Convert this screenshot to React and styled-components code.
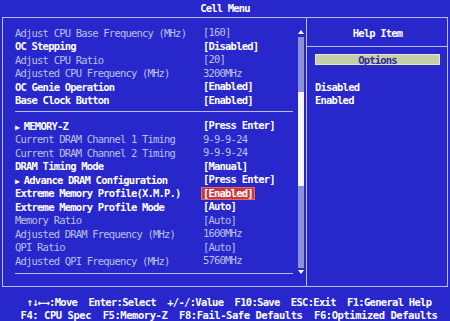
import React from 'react';
import styled, { createGlobalStyle } from 'styled-components';

const BLUE = '#2727cc';
const GRAY = '#bcc0ea';
const LINE = '#b8bff0';

const GlobalStyle = createGlobalStyle`
  html, body {
    margin: 0;
    padding: 0;
    background: ${BLUE};
  }
  body {
    width: 450px;
    height: 321px;
    overflow: hidden;
    font-family: "DejaVu Sans Mono", "Liberation Mono", monospace;
    font-size: 10.5px;
    letter-spacing: -0.8px;
    color: #ffffff;
  }
`;

const Screen = styled.div`
  width: 450px;
  height: 321px;
  display: flex;
  flex-direction: column;
  background: ${BLUE};
`;

const TitleBar = styled.div`
  height: 17px;
  display: flex;
  align-items: center;
  justify-content: center;
  font-weight: bold;
  padding-bottom: 2px;
  box-sizing: border-box;
`;

const Panel = styled.div`
  margin-left: 2px;
  width: 446px;
  height: 270px;
  box-sizing: border-box;
  border: 1px solid ${LINE};
  display: grid;
  grid-template-columns: 303px 1fr;
`;

const LeftPane = styled.div`
  display: flex;
  padding-right: 2px;
`;

const List = styled.div`
  flex: 1;
  padding: 8px 5px 0 12px;
`;

const Row = styled.div`
  height: 13.5px;
  display: flex;
  align-items: center;
  white-space: pre;
  color: ${({ $dim }) => ($dim ? GRAY : '#ffffff')};
  font-weight: ${({ $dim }) => ($dim ? 'normal' : 'bold')};
`;

const Label = styled.span`
  width: 188px;
  flex: none;
`;

const Pointer = styled.span`
  font-size: 8px;
  letter-spacing: 0;
  margin-right: 4px;
`;

const Value = styled.span`
  padding: 0 1px;
  margin-left: -1px;
  line-height: 11px;
  background: ${({ $active }) => ($active ? '#c8393b' : 'transparent')};
  outline: ${({ $active }) => ($active ? '1px solid #e06a6a' : 'none')};
`;

const Separator = styled.div`
  height: 1px;
  background: ${LINE};
  margin: ${({ $m }) => $m};
`;

const Scroll = styled.div`
  width: 6px;
  display: flex;
  flex-direction: column;
  align-items: center;
  padding-top: 12px;
`;

const Arrow = styled.div`
  width: 0;
  height: 0;
  border-left: 3px solid transparent;
  border-right: 3px solid transparent;
  ${({ $down }) =>
    $down ? 'border-top: 4px solid #ffffff;' : 'border-bottom: 4px solid #ffffff;'}
  margin: ${({ $down }) => ($down ? '2px 0 0' : '0 0 3px')};
`;

const Track = styled.div`
  width: 6px;
  height: 231px;
  background: #8d92d8;
  display: flex;
  flex-direction: column;
`;

const Thumb = styled.div`
  margin-top: 55px;
  height: 94px;
  background: #f4f4fb;
`;

const HelpPane = styled.div`
  border-left: 1px solid ${LINE};
  padding-top: 8px;
`;

const HelpRow = styled.div`
  height: 13.5px;
  display: flex;
  align-items: center;
  justify-content: ${({ $center }) => ($center ? 'center' : 'flex-start')};
  padding: 0 7px 0 8px;
  font-weight: bold;
`;

const HelpLine = styled.div`
  height: 13.5px;
  display: flex;
  align-items: center;
  &::after {
    content: '';
    flex: 1;
    height: 1px;
    background: ${LINE};
  }
`;

const OptionsBox = styled.div`
  flex: 1;
  height: 11px;
  box-sizing: border-box;
  background: #c6cea8;
  border: 1px solid #e4ead6;
  color: #2b2b9c;
  display: flex;
  align-items: center;
  justify-content: center;
  font-weight: bold;
`;

const Footer = styled.div`
  flex: 1;
  display: flex;
  flex-direction: column;
  align-items: center;
  padding-top: 8px;
  font-weight: bold;
`;

const FootLine = styled.div`
  height: 13px;
  display: flex;
  align-items: center;
  white-space: pre;
  margin-left: ${({ $shift }) => $shift || 0};
  letter-spacing: ${({ $wide }) => ($wide ? '-0.45px' : '-0.7px')};
`;

const cpuRows = [
  ['Adjust CPU Base Frequency (MHz)', '[160]', true],
  ['OC Stepping', '[Disabled]'],
  ['Adjust CPU Ratio', '[20]', true],
  ['Adjusted CPU Frequency (MHz)', '3200MHz', true],
  ['OC Genie Operation', '[Enabled]'],
  ['Base Clock Button', '[Enabled]'],
];

const memRows = [
  ['MEMORY-Z', '[Press Enter]', false, false, true],
  ['Current DRAM Channel 1 Timing', '9-9-9-24', true],
  ['Current DRAM Channel 2 Timing', '9-9-9-24', true],
  ['DRAM Timing Mode', '[Manual]'],
  ['Advance DRAM Configuration', '[Press Enter]', false, false, true],
  ['Extreme Memory Profile(X.M.P.)', '[Enabled]', false, true],
  ['Extreme Memory Profile Mode', '[Auto]'],
  ['Memory Ratio', '[Auto]', true],
  ['Adjusted DRAM Frequency (MHz)', '1600MHz', true],
  ['QPI Ratio', '[Auto]', true],
  ['Adjusted QPI Frequency (MHz)', '5760MHz', true],
];

const renderRows = (rows) =>
  rows.map(([label, value, dim, active, sub]) => (
    <Row key={label} $dim={dim}>
      <Label>
        {sub && <Pointer>{'\u25B6'}</Pointer>}
        {label}
      </Label>
      <Value $active={active}>{value}</Value>
    </Row>
  ));

export default function App() {
  return (
    <Screen>
      <GlobalStyle />
      <TitleBar>Cell Menu</TitleBar>
      <Panel>
        <LeftPane>
          <List>
            {renderRows(cpuRows)}
            <Separator $m="4px 0 7px" />
            {renderRows(memRows)}
            <Separator $m="5px 0 0" />
          </List>
          <Scroll>
            <Arrow />
            <Track>
              <Thumb />
            </Track>
            <Arrow $down />
          </Scroll>
        </LeftPane>
        <HelpPane>
          <HelpRow $center>Help Item</HelpRow>
          <HelpLine />
          <HelpRow>
            <OptionsBox>Options</OptionsBox>
          </HelpRow>
          <HelpRow />
          <HelpRow>Disabled</HelpRow>
          <HelpRow>Enabled</HelpRow>
        </HelpPane>
      </Panel>
      <Footer>
        <FootLine $shift="8px">{'\u2191\u2193\u2190\u2192:Move  Enter:Select  +/-/:Value  F10:Save  ESC:Exit  F1:General Help'}</FootLine>
        <FootLine $wide $shift="8px">{'F4: CPU Spec  F5:Memory-Z  F8:Fail-Safe Defaults  F6:Optimized Defaults'}</FootLine>
      </Footer>
    </Screen>
  );
}
